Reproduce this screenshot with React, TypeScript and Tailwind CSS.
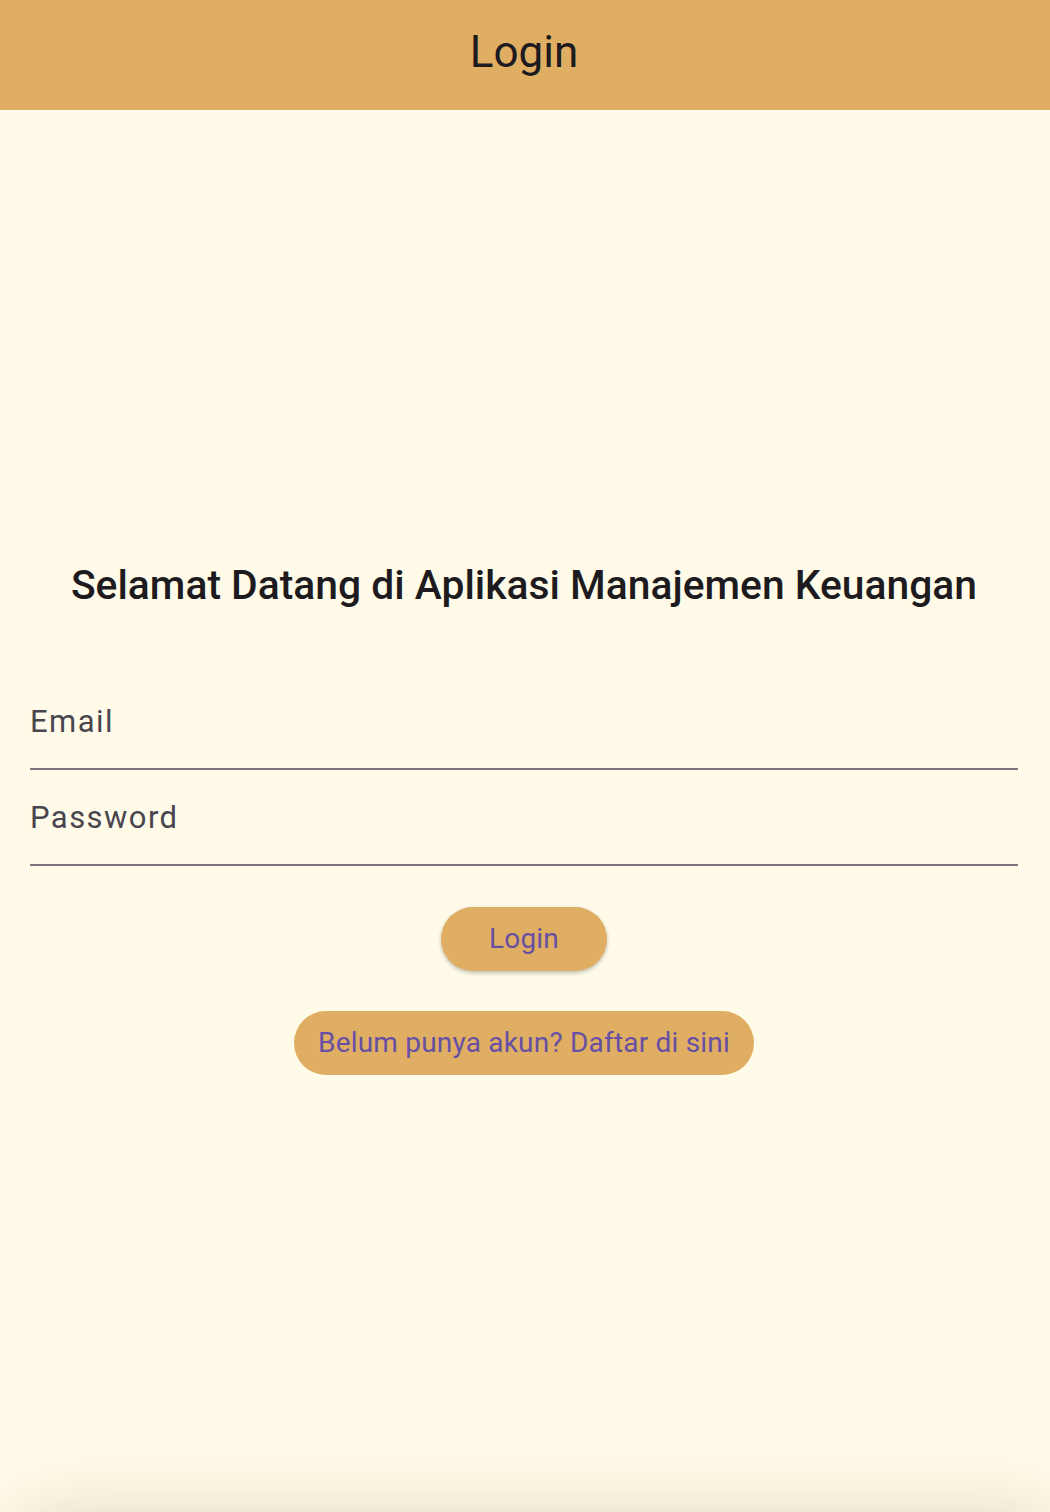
import { useState } from "react";

export default function App() {
  const [email, setEmail] = useState("");
  const [password, setPassword] = useState("");

  return (
    <div
      className="relative h-[1512px] overflow-hidden bg-[#FFFBE8] text-[#1D1B20]"
      style={{ fontFamily: "Roboto, 'Noto Sans', sans-serif" }}
    >
      <header className="h-[110px] bg-[#DFAE62] flex items-center justify-center pb-[6px] pr-[2px]">
        <h1 className="text-[44px] leading-none font-normal">Login</h1>
      </header>

      <main className="pl-[30px] pr-[32px] pt-[451px] flex flex-col">
        <h2 className="text-center text-[40.8px] leading-[48px] font-medium">
          Selamat Datang di Aplikasi Manajemen Keuangan
        </h2>

        <div className="mt-[65px]">
          <label className="h-[96px] flex items-end pb-[28px] border-b-2 border-[#79747E]">
            <input
              type="email"
              value={email}
              placeholder="Email"
              onChange={(e) => setEmail(e.target.value)}
              className="w-full bg-transparent text-[31px] leading-[36px] tracking-[1.45px] text-[#49454F] placeholder-[#49454F] outline-none"
            />
          </label>
          <label className="h-[96px] flex items-end pb-[28px] border-b-2 border-[#79747E]">
            <input
              type="password"
              value={password}
              placeholder="Password"
              onChange={(e) => setPassword(e.target.value)}
              className="w-full bg-transparent text-[31px] leading-[36px] tracking-[1.45px] text-[#49454F] placeholder-[#49454F] outline-none"
            />
          </label>
        </div>

        <div className="flex flex-col items-center">
          <button className="mt-[41px] h-[64px] w-[166px] rounded-full bg-[#DFAE62] text-[28px] tracking-[0.2px] text-[#6750A4] shadow-[0_2px_4px_rgba(0,0,0,0.25)]">
            Login
          </button>
          <button className="mt-[40px] h-[64px] w-[460px] rounded-full bg-[#DFAE62] text-[28px] tracking-[0.2px] text-[#6750A4]">
            Belum punya akun? Daftar di sini
          </button>
        </div>
      </main>

      {/* shadow of the sheet sitting just below the viewport */}
      <div className="absolute left-0 right-0 top-[1512px] h-[120px] rounded-tl-[70px] bg-[#FFFBE8] shadow-[0_0_70px_rgba(60,50,0,0.16)]" />
    </div>
  );
}
